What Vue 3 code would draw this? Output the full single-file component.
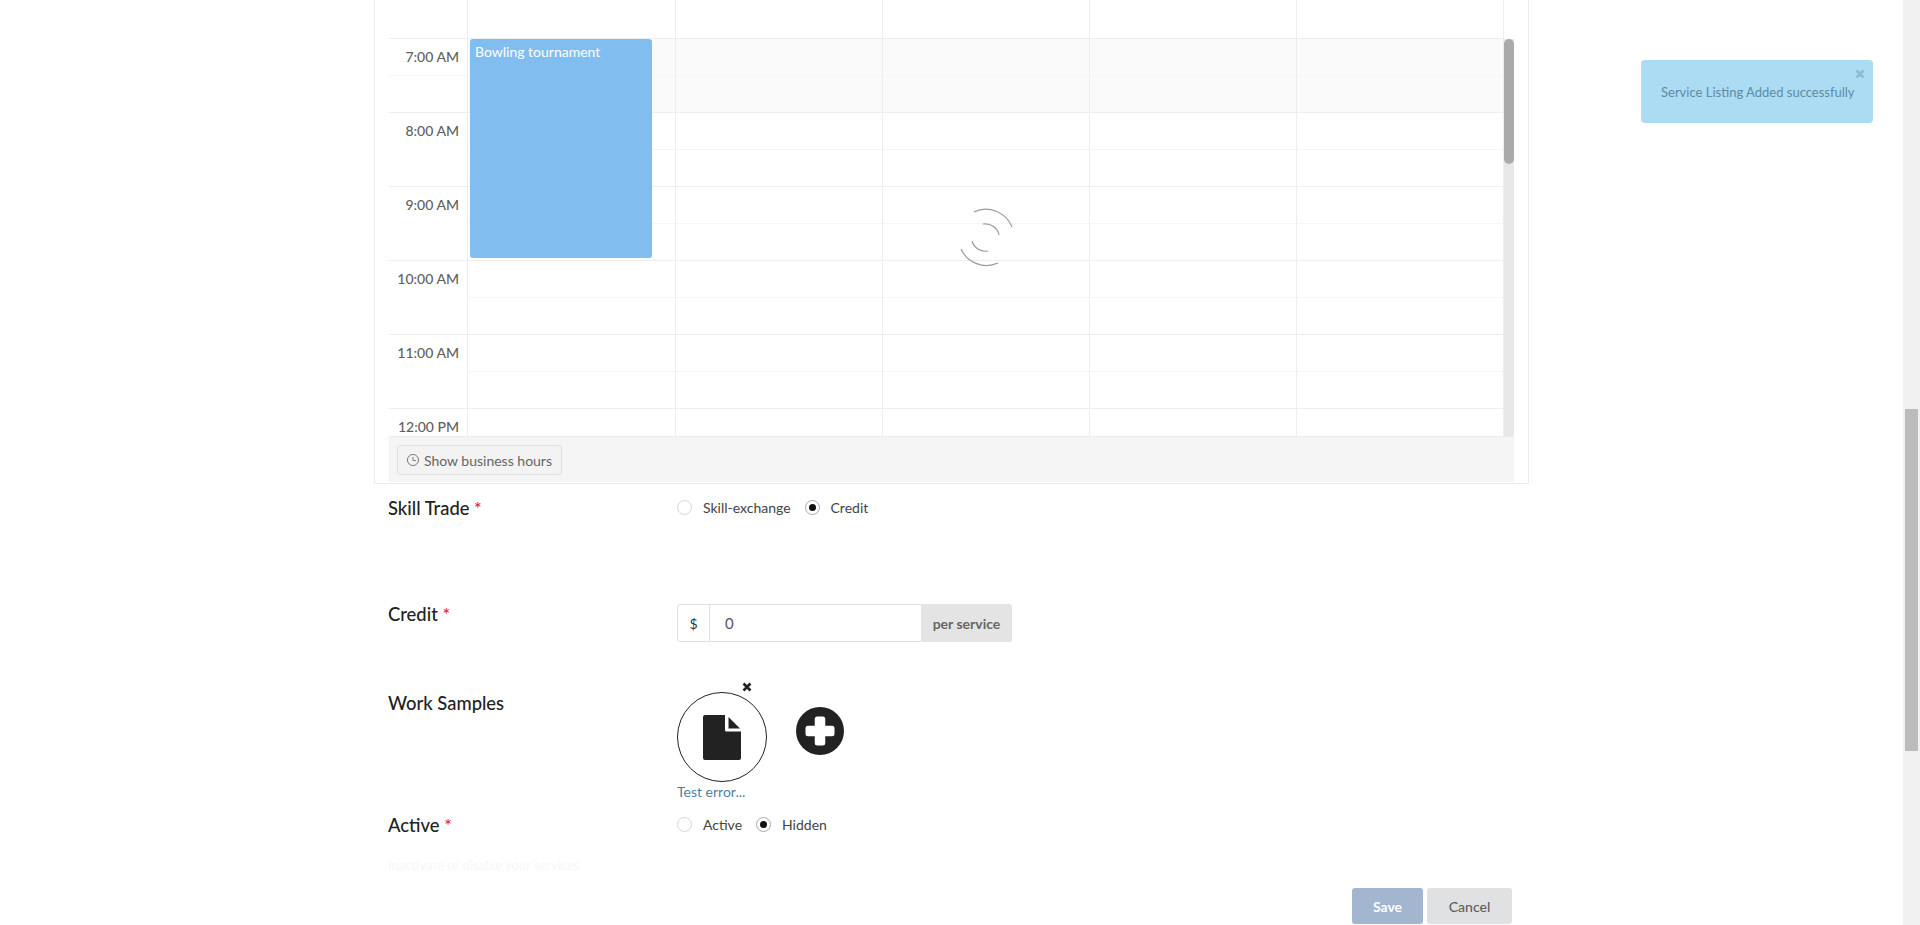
<script setup>
const gutterSlots = [
  { label: '' },
  { label: '7:00 AM', line: true },
  { label: '', half: true },
  { label: '8:00 AM', line: true },
  { label: '' },
  { label: '9:00 AM', line: true },
  { label: '' },
  { label: '10:00 AM', line: true },
  { label: '' },
  { label: '11:00 AM', line: true },
  { label: '' },
  { label: '12:00 PM', line: true },
]
const days = [0, 1, 2, 3, 4]
const slots = [0, 1, 2, 3, 4, 5, 6, 7, 8, 9, 10, 11]
</script>

<template>
  <div class="page">
    <main class="main">
      <section class="calendar-box">
        <div class="calendar">
          <div class="scroller">
            <div class="gutter">
              <div
                v-for="(s, i) in gutterSlots"
                :key="i"
                class="slot"
                :class="{ line: s.line, half: s.half, first: i === 0 }"
              >
                <span class="time">{{ s.label }}</span>
              </div>
            </div>
            <div v-for="d in days" :key="d" class="day">
              <div
                v-for="s in slots"
                :key="s"
                class="slot"
                :class="{ first: s === 0, line: s % 2 === 1, half: s % 2 === 0 && s > 0, off: s === 1 || s === 2 }"
              ></div>
              <div v-if="d === 0" class="event">Bowling tournament</div>
            </div>
            <div class="vscroll"><div class="vthumb"></div></div>
            <svg class="spinner" width="60" height="60" viewBox="0 0 60 60" fill="none" stroke="#9a9a9a" stroke-width="1.200">
              <path d="M18 5 A28 28 0 0 1 56 20" />
              <path d="M5 42 A28 28 0 0 0 42 56" />
              <path d="M27 17 A14 14 0 0 1 43 28" />
              <path d="M16 34 A14 14 0 0 0 32 44" />
            </svg>
          </div>
          <div class="cal-footer">
            <button class="hours-btn" type="button">
              <svg width="14" height="14" viewBox="0 0 14 14" fill="none" stroke="#666" stroke-width="1">
                <circle cx="7" cy="7" r="6.500" />
                <path d="M7 3.500 V7.500 H10.500" />
              </svg>
              Show business hours
            </button>
          </div>
        </div>
      </section>

      <div class="form">
        <div class="row row-skill">
          <div class="label">Skill Trade <span class="req">*</span></div>
          <div class="radios">
            <label class="radio"><span class="dot"></span>Skill-exchange</label>
            <label class="radio"><span class="dot on"></span>Credit</label>
          </div>
        </div>

        <div class="row row-credit">
          <div class="label">Credit <span class="req">*</span></div>
          <div class="input-group">
            <span class="prefix">$</span>
            <span class="value">0</span>
            <span class="suffix">per service</span>
          </div>
        </div>

        <div class="row row-work">
          <div class="label">Work Samples</div>
          <div class="samples">
            <div class="sample">
              <div class="circle">
                <svg width="38" height="45" viewBox="0 0 38 45">
                  <path fill="#222" d="M2 0 H22 V15 a1.500 1.500 0 0 0 1.500 1.500 H38 V43 a2 2 0 0 1 -2 2 H2 a2 2 0 0 1 -2 -2 V2 a2 2 0 0 1 2 -2 Z M25.500 2 L37 13.500 H25.500 Z" />
                </svg>
              </div>
              <svg class="remove" width="10" height="10" viewBox="0 0 10 10">
                <path d="M1.500 1.500 L8.500 8.500 M8.500 1.500 L1.500 8.500" stroke="#222" stroke-width="2.600" />
              </svg>
              <a class="file-name">Test error...</a>
            </div>
            <svg class="add" width="48" height="48" viewBox="0 0 48 48">
              <circle cx="24" cy="24" r="24" fill="#222" />
              <rect x="9.500" y="18.750" width="29" height="10.500" rx="2.500" fill="#fff" />
              <rect x="18.750" y="9.500" width="10.500" height="29" rx="2.500" fill="#fff" />
            </svg>
          </div>
        </div>

        <div class="row row-active">
          <div class="label">Active <span class="req">*</span></div>
          <div class="radios">
            <label class="radio"><span class="dot"></span>Active</label>
            <label class="radio"><span class="dot on"></span>Hidden</label>
          </div>
        </div>

        <div class="hint">Inactivate or disable your services</div>

        <div class="actions">
          <button class="btn save" type="button">Save</button>
          <button class="btn cancel" type="button">Cancel</button>
        </div>
      </div>
    </main>

    <aside class="page-scroll"><div class="page-thumb"></div></aside>

    <div class="toast">
      <svg class="toast-close" width="10" height="10" viewBox="0 0 10 10">
        <path d="M1.500 1.500 L8.500 8.500 M8.500 1.500 L1.500 8.500" stroke="#8bbcd4" stroke-width="2.800" />
      </svg>
      Service Listing Added successfully
    </div>
  </div>
</template>

<style>
html, body { margin: 0; overflow: hidden; background: #fff; }
</style>

<style scoped>
.page {
  height: 925px;
  display: flex;
  overflow: hidden;
  font-family: Lato, "Liberation Sans", sans-serif;
  color: #222;
  background: #fff;
}
.main { flex: 1; min-width: 0; }
.page-scroll {
  width: 17px;
  background: #f1f1f1;
  padding: 409px 2px 0;
  box-sizing: border-box;
}
.page-thumb { height: 342px; background: #bcbcbc; }

.calendar-box {
  width: 1155px;
  height: 484px;
  margin-left: 374px;
  box-sizing: border-box;
  border: 1px solid #ececec;
  border-top: 0;
  padding: 0 14px 1px;
}
.scroller {
  position: relative;
  height: 436px;
  overflow: hidden;
  display: grid;
  grid-template-columns: 78px 208px 207px 207px 207px 208px 10px;
}
.slot { height: 37px; box-sizing: border-box; }
.slot.first { height: 38px; }
.slot.line { border-top: 1px solid #eeeeee; }
.slot.half { border-top: 1px solid #f5f5f5; }
.slot.off { background: #fafafa; }
.gutter .slot { position: relative; }
.time {
  position: absolute;
  top: 9px;
  right: 8px;
  font-size: 14px;
  line-height: 17px;
  font-weight: 500;
  color: #5f5f5f;
  white-space: nowrap;
}
.day { position: relative; border-left: 1px solid #ededed; }
.day:nth-child(6) { border-right: 1px solid #ededed; }
.event {
  position: absolute;
  left: 2px;
  top: 39px;
  height: 219px;
  width: 182px;
  box-sizing: border-box;
  padding: 4px 5px;
  font-size: 14px;
  line-height: 17px;
  color: #fff;
  background: #82bdf0;
  border-radius: 3px;
}
.vscroll {
  margin-top: 39px;
  background: #e7e7e7;
  height: 397px;
}
.vthumb { height: 125px; background: #aaa; border-radius: 5px; }
.spinner { position: absolute; left: 567px; top: 207px; pointer-events: none; }
.cal-footer {
  height: 46px;
  box-sizing: border-box;
  padding: 8px 8px 0;
  background: #f5f5f5;
  border-top: 1px solid #ececec;
}
.hours-btn {
  display: flex;
  align-items: center;
  gap: 5px;
  height: 30px;
  width: 165px;
  box-sizing: border-box;
  padding: 0 9px;
  font-family: inherit;
  font-size: 14px;
  color: #666;
  background: #f3f3f3;
  border: 1px solid #e0e0e0;
  border-radius: 3px;
  white-space: nowrap;
}

.form { margin-left: 388px; width: 1124px; }
.row { display: flex; box-sizing: border-box; }
.label { width: 289px; font-size: 18.400px; line-height: 24px; font-weight: 500; color: #222; }
.req { color: #e8232f; font-size: 18px; }
.row-skill { height: 120px; padding-top: 12px; }
.row-credit { height: 87px; }
.row-credit .label { margin-top: -2px; }
.row-work { height: 122px; }
.row-active { height: 43px; }
.radios { display: flex; gap: 14px; padding-top: 1px; }
.radio { display: flex; align-items: center; height: 20px; gap: 11px; font-size: 14px; color: #444; }
.dot {
  width: 15px;
  height: 15px;
  box-sizing: border-box;
  border: 1px solid #d6d6d6;
  border-radius: 50%;
  background: #fff;
  display: flex;
  align-items: center;
  justify-content: center;
}
.dot.on { border-color: #aaa; }
.dot.on::after { content: ""; width: 7px; height: 7px; border-radius: 50%; background: #111; }
.input-group {
  display: flex;
  width: 335px;
  height: 38px;
  box-sizing: border-box;
  font-size: 14px;
  border: 1px solid #e0e0e0;
  border-radius: 3px;
  color: #333;
}
.prefix { width: 31px; border-right: 1px solid #e0e0e0; display: flex; align-items: center; justify-content: center; }
.value { flex: 1; display: flex; align-items: center; padding-left: 15px; font-size: 15px; color: #555; }
.suffix {
  width: 91px;
  margin: -1px;
  display: flex;
  align-items: center;
  justify-content: center;
  background: #e4e4e4;
  border-radius: 0 3px 3px 0;
  font-size: 14px;
  font-weight: 700;
  color: #666;
}
.samples { display: flex; gap: 29px; align-items: flex-start; }
.sample { position: relative; width: 90px; margin-top: 1px; }
.circle {
  width: 90px;
  height: 90px;
  box-sizing: border-box;
  border: 1px solid #222;
  border-radius: 50%;
  display: flex;
  align-items: center;
  justify-content: center;
}
.remove { position: absolute; left: 65px; top: -10px; }
.file-name { display: block; font-size: 14px; line-height: 20px; color: #4f7fa6; white-space: nowrap; }
.add { margin-top: 16px; }
.hint { font-size: 13px; line-height: 18px; color: #f7f7f7; }
.actions { display: flex; justify-content: flex-end; gap: 4px; margin-top: 14px; }
.btn {
  height: 36px;
  border: 0;
  border-radius: 3px;
  font-family: inherit;
  font-size: 14px;
}
.save { width: 71px; background: #a2b6d0; color: #fff; font-weight: 700; }
.cancel { width: 85px; background: #e0e1e2; color: #5f5f5f; font-weight: 500; }

.toast {
  position: absolute;
  left: 1641px;
  top: 60px;
  width: 232px;
  height: 63px;
  box-sizing: border-box;
  padding: 22px 0 0 20px;
  font-size: 13px;
  line-height: 20px;
  color: #5f8aa6;
  background: #abdcf3;
  border-radius: 4px;
  white-space: nowrap;
}
.toast-close { position: absolute; right: 8px; top: 9px; }
</style>
